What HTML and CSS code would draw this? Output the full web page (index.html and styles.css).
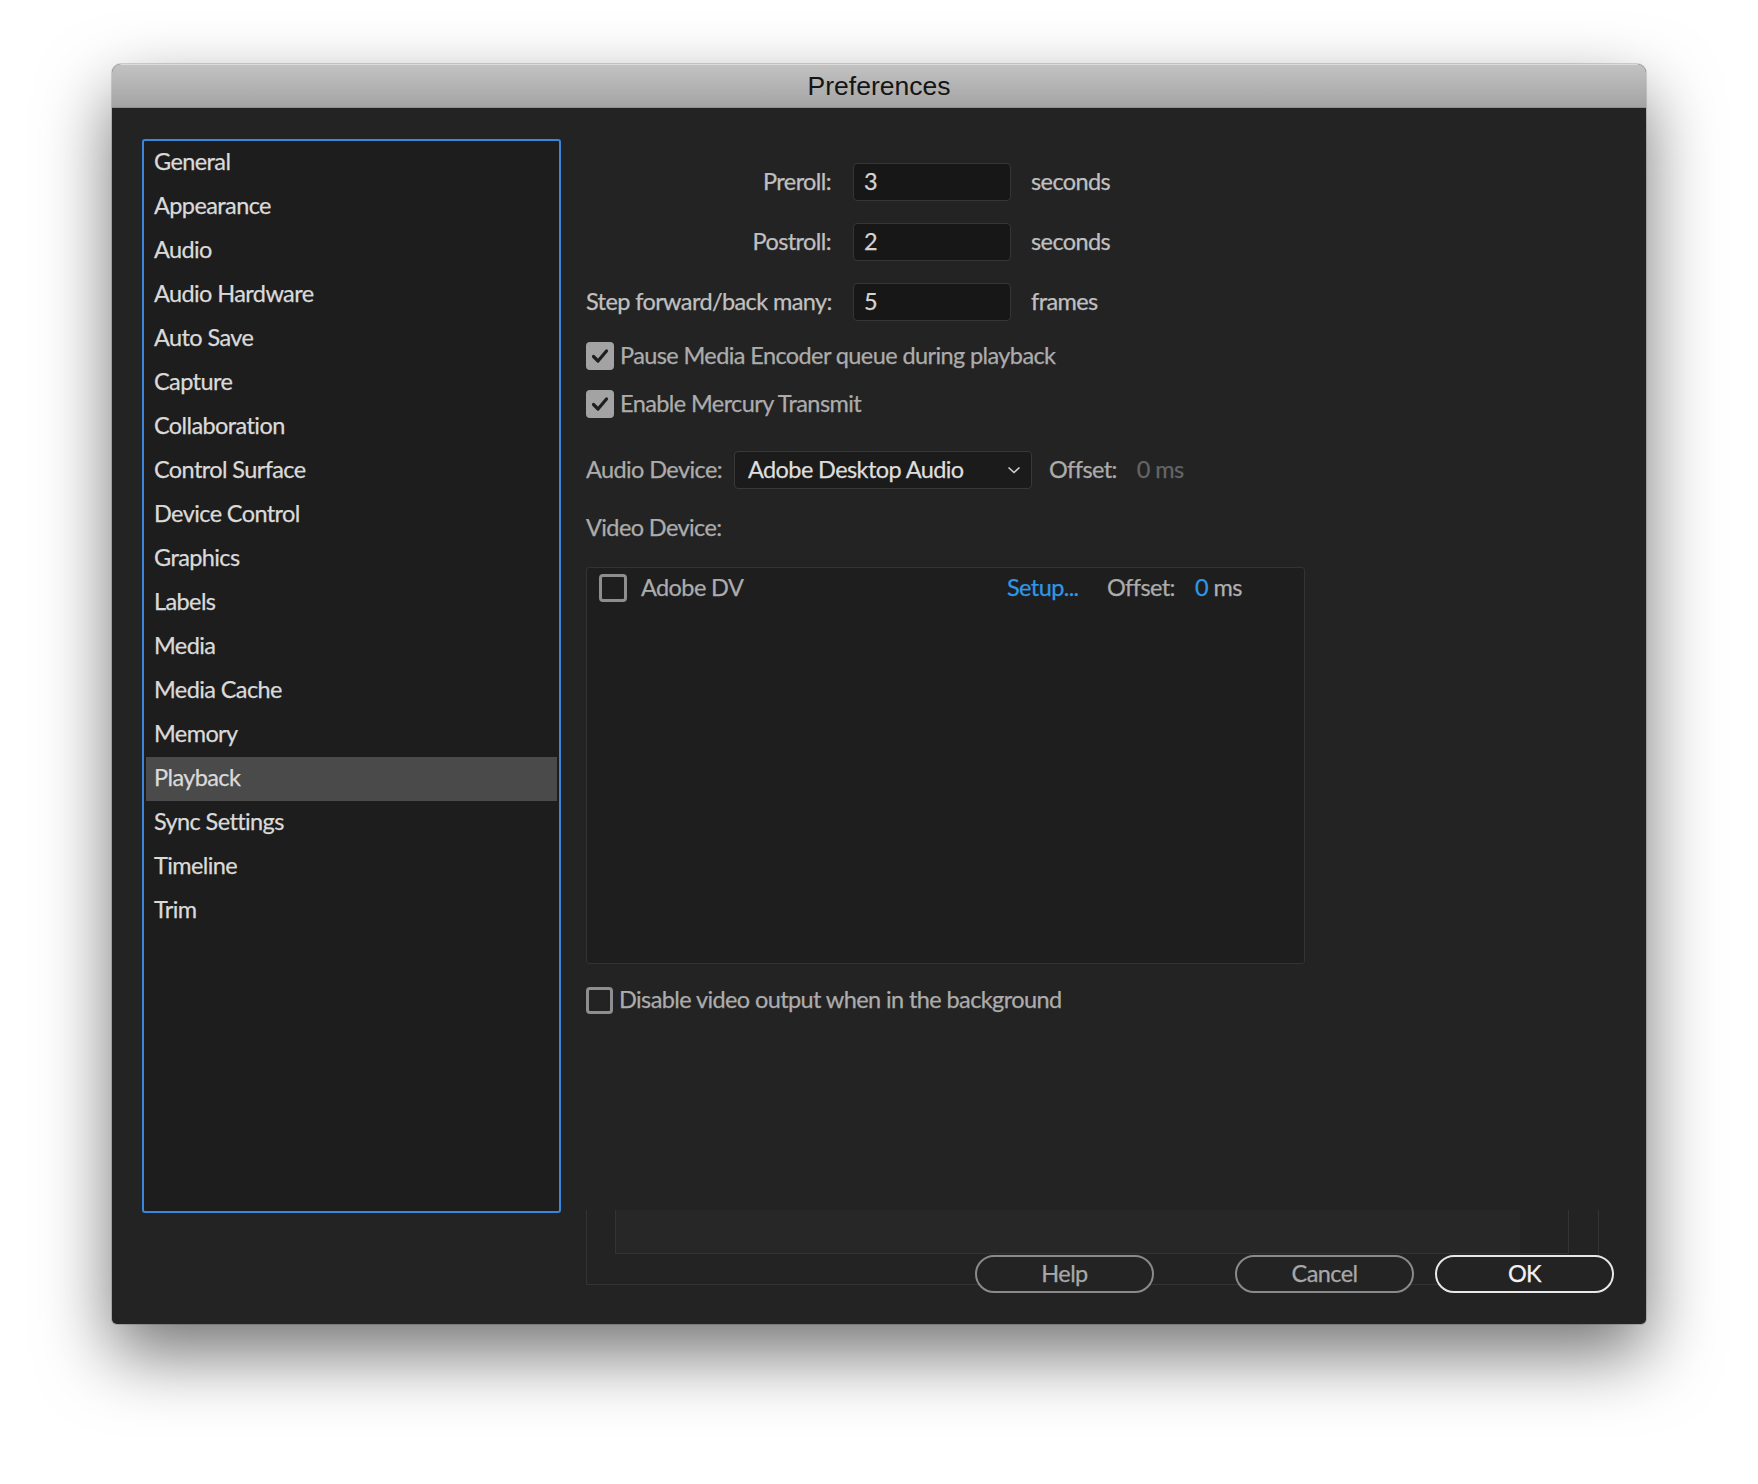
FILE: index.html
```html
<!DOCTYPE html>
<html lang="en">
<head>
    <meta charset="UTF-8">
    <title>Preferences</title>
    <link rel="stylesheet" href="styles.css">
</head>
<body>
    <div class="window">
        <div class="titlebar">Preferences</div>
        <div class="window-body">
            <ul class="category-list">
                <li>General</li>
                <li>Appearance</li>
                <li>Audio</li>
                <li>Audio Hardware</li>
                <li>Auto Save</li>
                <li>Capture</li>
                <li>Collaboration</li>
                <li>Control Surface</li>
                <li>Device Control</li>
                <li>Graphics</li>
                <li>Labels</li>
                <li>Media</li>
                <li>Media Cache</li>
                <li>Memory</li>
                <li class="selected">Playback</li>
                <li>Sync Settings</li>
                <li>Timeline</li>
                <li>Trim</li>
            </ul>

            <div class="panel">
                <div class="field-row">
                    <label class="field-label">Preroll:</label>
                    <div class="text-input">3</div>
                    <span class="unit">seconds</span>
                </div>
                <div class="field-row">
                    <label class="field-label">Postroll:</label>
                    <div class="text-input">2</div>
                    <span class="unit">seconds</span>
                </div>
                <div class="field-row">
                    <label class="field-label">Step forward/back many:</label>
                    <div class="text-input">5</div>
                    <span class="unit">frames</span>
                </div>

                <div class="check-row first">
                    <span class="checkbox checked">
                        <svg viewBox="0 0 28 28" width="28" height="28"><polyline points="7.5,14.5 12,19 20.5,9" fill="none" stroke="#1f1f1f" stroke-width="3.2" stroke-linecap="round" stroke-linejoin="round"/></svg>
                    </span>
                    <span class="check-label">Pause Media Encoder queue during playback</span>
                </div>
                <div class="check-row">
                    <span class="checkbox checked">
                        <svg viewBox="0 0 28 28" width="28" height="28"><polyline points="7.5,14.5 12,19 20.5,9" fill="none" stroke="#1f1f1f" stroke-width="3.2" stroke-linecap="round" stroke-linejoin="round"/></svg>
                    </span>
                    <span class="check-label">Enable Mercury Transmit</span>
                </div>

                <div class="device-row">
                    <span class="device-label">Audio Device:</span>
                    <div class="dropdown">
                        <span>Adobe Desktop Audio</span>
                        <svg class="chevron" viewBox="0 0 14 8" width="14" height="8"><polyline points="1.5,1.5 7,6.5 12.5,1.5" fill="none" stroke="#cfcfcf" stroke-width="1.6"/></svg>
                    </div>
                    <span class="offset-label">Offset:</span>
                    <span class="offset-value dim">0 ms</span>
                </div>

                <div class="video-label">Video Device:</div>

                <div class="device-box">
                    <div class="device-item">
                        <span class="checkbox"></span>
                        <span class="device-name">Adobe DV</span>
                        <span class="setup-link">Setup...</span>
                        <span class="offset-label">Offset:</span>
                        <span class="offset-value"><span class="blue">0</span> ms</span>
                    </div>
                </div>

                <div class="check-row background-row">
                    <span class="checkbox"></span>
                    <span class="check-label">Disable video output when in the background</span>
                </div>

                <div class="footer-frame">
                    <div class="footer-inner"></div>
                    <div class="footer-edge"></div>
                </div>
                <div class="button-row">
                    <button class="btn btn-help">Help</button>
                    <button class="btn btn-cancel">Cancel</button>
                    <button class="btn btn-ok">OK</button>
                </div>
            </div>
        </div>
    </div>
</body>
</html>
```

FILE: styles.css
```css
* {
    margin: 0;
    padding: 0;
    box-sizing: border-box;
}

body {
    min-height: 1484px;
    background: #ffffff;
    padding-top: 64px;
    font-family: 'Lato', 'Open Sans', sans-serif;
    font-size: 23.5px;
    letter-spacing: -0.6px;
}

.window {
    width: 1534px;
    height: 1260px;
    margin: 0 auto;
    background: #232323;
    border-radius: 9px 9px 5px 5px;
    box-shadow: 0 30px 70px rgba(0, 0, 0, 0.55), 0 0 0 1px rgba(0, 0, 0, 0.15);
    overflow: hidden;
    -webkit-text-stroke: 0.25px currentColor;
}

.titlebar {
    height: 44px;
    line-height: 42px;
    text-align: center;
    font-family: 'Liberation Sans', Arial, sans-serif;
    font-size: 26.5px;
    letter-spacing: 0;
    color: #151515;
    -webkit-text-stroke: 0;
    background: linear-gradient(#c2c2c2, #a4a4a4);
    border-top: 1px solid #dcdcdc;
    border-bottom: 1px solid #8f8f8f;
}

.window-body {
    display: flex;
    padding: 31px 32px 0 30px;
}

/* Liste des catégories */
.category-list {
    list-style: none;
    width: 419px;
    height: 1074px;
    flex-shrink: 0;
    background: #1d1d1d;
    border: 2px solid #3a86dc;
    border-radius: 3px;
    padding: 0 2px;
}

.category-list li {
    height: 44px;
    line-height: 40px;
    padding-left: 8px;
    color: #dadada;
}

.category-list li.selected {
    background: #4a4a4a;
}

/* Panneau de droite */
.panel {
    flex: 1;
    margin-left: 25px;
    padding-top: 24px;
    color: #bdbdbd;
}

.field-row {
    display: flex;
    align-items: center;
    height: 38px;
    margin-bottom: 22px;
}

.field-row > span,
.field-row > label {
    padding-bottom: 3px;
}

.field-label {
    width: 245px;
    text-align: right;
    white-space: nowrap;
    color: #c0c0c0;
}

.text-input {
    width: 158px;
    height: 38px;
    margin-left: 22px;
    padding-left: 10px;
    line-height: 34px;
    background: #171717;
    border: 1px solid #363636;
    border-radius: 4px;
    color: #d4d4d4;
}

.unit {
    margin-left: 20px;
    color: #c0c0c0;
}

.check-row {
    display: flex;
    align-items: center;
    height: 28px;
    margin-top: 20px;
}

.check-row.first {
    margin-top: -1px;
}

.checkbox {
    width: 28px;
    height: 28px;
    flex-shrink: 0;
    border: 3px solid #8e8e8e;
    border-radius: 4px;
    display: flex;
}

.checkbox.checked {
    background: #a3a3a3;
    border: none;
}

.check-label {
    margin-left: 6px;
    padding-bottom: 3px;
    color: #acacac;
}

.device-row {
    display: flex;
    align-items: center;
    margin-top: 33px;
}

.device-row > span {
    padding-bottom: 3px;
}

.device-label {
    width: 148px;
    color: #acacac;
}

.dropdown {
    width: 298px;
    height: 38px;
    display: flex;
    align-items: center;
    justify-content: space-between;
    padding: 0 10px 3px 13px;
    background: #1b1b1b;
    border: 1px solid #383838;
    border-radius: 4px;
    color: #dedede;
}

.chevron {
    margin-top: 3px;
}

.device-row .offset-label {
    margin-left: 17px;
}

.offset-label {
    color: #acacac;
}

.offset-value {
    margin-left: 21px;
    color: #b0b0b0;
}

.device-row .offset-value {
    margin-left: 20px;
}

.offset-value.dim {
    color: #656565;
}

.blue {
    color: #2f97e6;
}

.video-label {
    margin-top: 25px;
    height: 28px;
    line-height: 26px;
    color: #acacac;
}

.device-box {
    width: 719px;
    height: 397px;
    margin-top: 25px;
    padding: 6px 12px;
    background: #1e1e1e;
    border: 1px solid #333333;
    border-radius: 3px;
}

.device-item {
    display: flex;
    align-items: center;
    height: 28px;
}

.device-item > span {
    padding-bottom: 2px;
}

.device-item > .checkbox {
    padding-bottom: 0;
}

.device-name {
    width: 366px;
    margin-left: 14px;
    color: #acacac;
}

.setup-link {
    width: 100px;
    color: #2f97e6;
}

.device-item .offset-label {
    width: 88px;
}

.device-item .offset-value {
    margin-left: 0;
}

.background-row {
    margin-top: 22px;
}

.background-row .checkbox {
    width: 27px;
    height: 27px;
}

/* Cadre du bas et boutons */
.footer-frame {
    display: flex;
    width: 1013px;
    height: 75px;
    margin-top: 196px;
    border-left: 1px solid #333333;
    border-bottom: 1px solid #333333;
}

.footer-inner {
    width: 955px;
    height: 44px;
    margin-left: 28px;
    background: linear-gradient(90deg, #272727 95%, #232323 95%);
    border-left: 1px solid #333333;
    border-right: 1px solid #333333;
    border-bottom: 1px solid #333333;
}

.footer-edge {
    width: 30px;
    height: 44px;
    border-right: 1px solid #333333;
}

.button-row {
    display: flex;
    justify-content: flex-end;
    margin-top: -30px;
}

.btn {
    width: 179px;
    height: 38px;
    padding-bottom: 2px;
    border-radius: 19px;
    background: #232323;
    border: 2px solid #8a8a8a;
    color: #a8a8a8;
    font-family: inherit;
    font-size: 23.5px;
    letter-spacing: -0.6px;
    -webkit-text-stroke: 0.25px currentColor;
}

.btn-help {
    margin-right: 81px;
}

.btn-cancel {
    margin-right: 21px;
}

.btn-ok {
    border-color: #e8e8e8;
    color: #f2f2f2;
}
```
